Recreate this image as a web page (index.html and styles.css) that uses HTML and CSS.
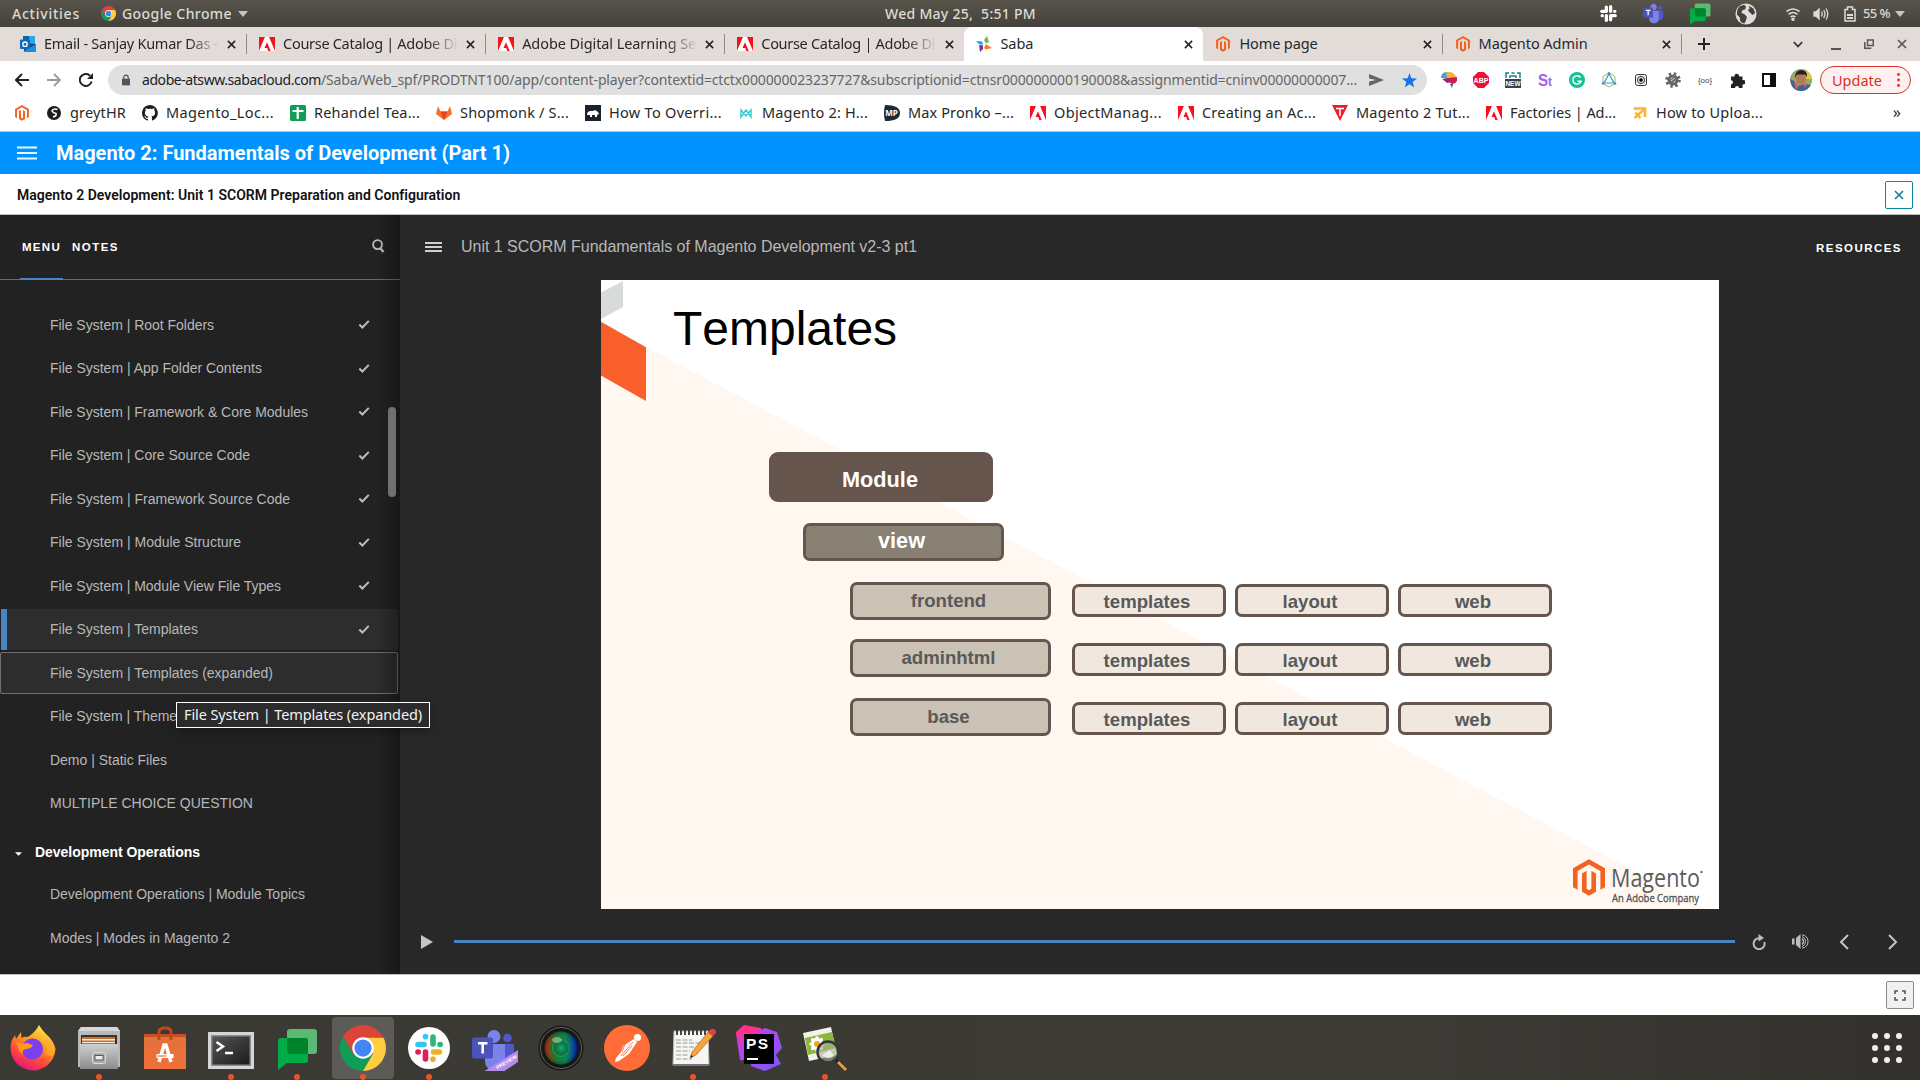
FILE: index.html
```html
<!DOCTYPE html>
<html lang="en">
<head>
<meta charset="utf-8">
<title>Saba</title>
<link rel="stylesheet" href="styles.css">
</head>
<body>
<svg class="defs" width="0" height="0">
  <defs>
    <linearGradient id="gFox" x1="0.8" y1="0" x2="0.3" y2="1"><stop offset="0" stop-color="#fff34f"/><stop offset=".4" stop-color="#ff9a20"/><stop offset=".7" stop-color="#ff4a3a"/><stop offset="1" stop-color="#e3127d"/></linearGradient>
    <linearGradient id="gSteel" x1="0" y1="0" x2="0" y2="1"><stop offset="0" stop-color="#cfcfcf"/><stop offset="1" stop-color="#8b8b8b"/></linearGradient>
    <linearGradient id="gBag" x1="0" y1="0" x2="0" y2="1"><stop offset="0" stop-color="#e2723c"/><stop offset="1" stop-color="#ef7038"/></linearGradient>
    <linearGradient id="gTerm" x1="0" y1="0" x2="1" y2="1"><stop offset="0" stop-color="#555"/><stop offset="1" stop-color="#1c1c1c"/></linearGradient>
    <linearGradient id="gRgb" x1="0" y1="0" x2="1" y2="0"><stop offset="0" stop-color="#c8200c"/><stop offset=".35" stop-color="#1f7a28"/><stop offset=".65" stop-color="#0c8a52"/><stop offset="1" stop-color="#0717d8"/></linearGradient>
    <radialGradient id="gLens"><stop offset="0" stop-color="#0fb878" stop-opacity=".9"/><stop offset=".35" stop-color="#0a6b45" stop-opacity=".6"/><stop offset=".75" stop-color="#0a7a48" stop-opacity=".15"/><stop offset="1" stop-color="#000" stop-opacity=".35"/></radialGradient>
    <linearGradient id="gPs" x1="0" y1="0" x2="1" y2="1"><stop offset="0" stop-color="#ff318c"/><stop offset=".35" stop-color="#b345f1"/><stop offset="1" stop-color="#765af8"/></linearGradient>
    <symbol id="adobe" viewBox="0 0 16 16"><path fill="#fa0f1c" d="M0 1h5.900L0 15zM10.100 1H16v14zM8 6.200l3.700 8.800H9.300l-1.100-2.900H5.500z"/></symbol>
    <symbol id="magento" viewBox="0 0 32 37"><path fill="#f26322" d="M16 0 32 9v19l-4.600 2.600V11.700L16 5.200 4.600 11.700v18.900L0 28V9z"/><path fill="#f26322" d="M9 14.200l4.600-2.600v18l2.400 1.400 2.400-1.400v-18l4.600 2.600v18.200L16 36.500l-7-4.100z"/></symbol>
    <symbol id="chrome" viewBox="0 0 48 48"><path fill="#0f9d58" d="M3.200 12 13.600 30 24 35l10.400-5L24 48A24 24 0 0 1 3.200 12z"/><path fill="#ffcd40" d="M24 13h21.300A24 24 0 0 1 24 48l10.400-18z"/><path fill="#db4437" d="M3.200 12A24 24 0 0 1 45.300 13H24L13.600 30z"/><circle cx="24" cy="24" r="11.200" fill="#fff"/><circle cx="24" cy="24" r="9" fill="#4285f4"/></symbol>
    <symbol id="slackmono" viewBox="0 0 24 24"><g fill="none" stroke="currentColor" stroke-width="4.200" stroke-linecap="round"><path d="M9.300 4v5.300M3.500 9.300h5.800M14.700 3.500v5.800M20 9.300h-.200M14.700 20v-5.300M20.500 14.700h-5.800M9.300 20.500v-5.800M4 14.700h.200"/></g></symbol>
    <symbol id="x" viewBox="0 0 10 10"><path d="M1 1l8 8M9 1L1 9" stroke="currentColor" stroke-width="1.700" fill="none"/></symbol>
    <symbol id="check" viewBox="0 0 12 10"><path d="M.800 5l3.400 3.400L11.300 1" stroke="#bdbdbd" stroke-width="2.200" fill="none"/></symbol>
    <symbol id="chat" viewBox="0 0 40 42"><rect x="10" y="1" width="30" height="25" rx="3" fill="#5bb974"/><path fill="#00ac47" d="M1 13a3 3 0 0 1 3-3h24a3 3 0 0 1 3 3v19a3 3 0 0 1-3 3H10l-9 7z"/><path fill="#00832d" d="M10 10h18a3 3 0 0 1 3 3v13H13a3 3 0 0 1-3-3z"/></symbol>
    <symbol id="teams" viewBox="0 0 46 46"><circle cx="22" cy="8.500" r="6.500" fill="#7b83eb"/><circle cx="35.500" cy="10" r="4.300" fill="#5059c9"/><path fill="#5059c9" d="M30 16h12v14c0 7-10 8-12 2z"/><path fill="#7b83eb" d="M13 16h20v17c0 13-20 13-20 0z"/><rect y="9.500" width="21" height="21" rx="2" fill="#4b53bc"/><path d="M6 15.300h9.500M10.700 15v10.500" stroke="#fff" stroke-width="2.600"/></symbol>
    <symbol id="globe" viewBox="0 0 24 24"><circle cx="12" cy="12" r="11.500" fill="#ddd"/><path fill="#45423c" d="M5 3.500l5-1.500 2 2-1 3-3 1-1 3 3 1 3 3-1 4-2 3.500-4-2-1-5-3-3 .500-5zM15 3l5 3 2 5-3 2-3-3-2-2 2-2z"/></symbol>
  </defs>
</svg>

<header class="topbar">
  <span class="activities" data-fit="68">Activities</span>
  <svg class="tb-chrome"><use href="#chrome"/></svg>
  <span class="appname" data-fit="110">Google Chrome</span>
  <svg class="tri" viewBox="0 0 10 6"><path d="M0 0h10L5 6z"/></svg>
  <span class="clock" data-fit="151">Wed May 25,&nbsp; 5:51 PM</span>
  <div class="tray">
    <svg class="s18"><use href="#slackmono"/></svg>
    <svg class="s22"><use href="#teams"/></svg>
    <svg class="s22"><use href="#chat"/></svg>
    <svg class="s22"><use href="#globe"/></svg>
    <svg class="s16" viewBox="0 0 16 16" fill="none" stroke="#dfdbd2" stroke-width="1.600"><path d="M1.500 5.500q6.500-5 13 0M3.500 8.300q4.500-3.500 9 0M5.500 11q2.500-2 5 0"/><circle cx="8" cy="13.300" r="1" fill="#dfdbd2"/></svg>
    <svg class="s16" viewBox="0 0 16 16" fill="none" stroke="#dfdbd2" stroke-width="1.300"><path fill="#dfdbd2" d="M1 6h2l3-3v10l-3-3H1z"/><path d="M8.500 5.500q1.500 2.500 0 5M10.700 4q2.500 4 0 8M13 2.500q3.500 5.500 0 11"/></svg>
    <svg class="bat" viewBox="0 0 12 16" fill="none" stroke="#dfdbd2" stroke-width="1.500"><path d="M1 3.500h2.500V1h5v2.500H11V15H1z"/><path d="M3 9h6M3 12h6" stroke-width="2"/></svg>
    <span class="pct" data-fit="27">55 %</span>
    <svg class="tri" viewBox="0 0 10 6"><path d="M0 0h10L5 6z"/></svg>
  </div>
</header>

<nav class="tabs">
  <div class="tab"><svg class="s16" viewBox="0 0 16 16"><path fill="#28a8ea" d="M4 0h11v8H4z"/><path fill="#0364b8" d="M3 0h6v7H3z"/><path fill="#14447d" d="M4 7l12 1v7H4z"/><path fill="#1490df" d="M4 15l12-7v8H4z"/><rect y="3.500" width="10" height="9.500" rx="1" fill="#0f6cbd"/><circle cx="5" cy="8.200" r="2.200" fill="none" stroke="#fff" stroke-width="1.300"/></svg><span class="ttl fade"><span data-fit="174">Email - Sanjay Kumar Das -</span></span><svg class="cx"><use href="#x"/></svg></div>
  <div class="tab"><svg class="s16 plate"><use href="#adobe"/></svg><span class="ttl fade"><span data-fit="174">Course Catalog | Adobe Di</span></span><svg class="cx"><use href="#x"/></svg></div>
  <div class="tab"><svg class="s16 plate"><use href="#adobe"/></svg><span class="ttl fade"><span data-fit="174">Adobe Digital Learning Se</span></span><svg class="cx"><use href="#x"/></svg></div>
  <div class="tab nosep"><svg class="s16 plate"><use href="#adobe"/></svg><span class="ttl fade"><span data-fit="174">Course Catalog | Adobe Di</span></span><svg class="cx"><use href="#x"/></svg></div>
  <div class="tab on"><svg class="s16" viewBox="0 0 16 16"><path fill="#14a0dc" d="M0 5l6 .500L7 9 3 8z"/><path fill="#6cbe45" d="M11 0l2 6-3 1.500L8 4z"/><path fill="#8d2a90" d="M3 9l4 .500V13l-3 3z"/><path fill="#f58220" d="M10 8l6 4-6 1.500L8 12z"/></svg><span class="ttl"><span data-fit="33">Saba</span></span><svg class="cx"><use href="#x"/></svg></div>
  <div class="tab"><svg class="s16"><use href="#magento"/></svg><span class="ttl"><span data-fit="78">Home page</span></span><svg class="cx"><use href="#x"/></svg></div>
  <div class="tab"><svg class="s16"><use href="#magento"/></svg><span class="ttl"><span data-fit="109">Magento Admin</span></span><svg class="cx"><use href="#x"/></svg></div>
  <svg class="newtab" viewBox="0 0 12 12"><path d="M6 0v12M0 6h12" stroke="#222" stroke-width="2"/></svg>
  <div class="winctl">
    <svg width="10" height="7" viewBox="0 0 10 7"><path d="M.800 1L5 5.500 9.200 1" fill="none" stroke="#333" stroke-width="1.800"/></svg>
    <svg width="10" height="12" viewBox="0 0 10 12"><path d="M0 11h10" stroke="#555" stroke-width="2"/></svg>
    <svg width="10" height="10" viewBox="0 0 10 10" fill="none" stroke="#555" stroke-width="1.500"><path d="M3.500 1h5.800v5.500H3.500zM.800 3v6.200h6.500"/></svg>
    <svg class="wx"><use href="#x"/></svg>
  </div>
</nav>

<div class="toolbar">
  <div class="navbtns">
    <svg viewBox="0 0 14 14"><path d="M14 7H1.500M7 1L1 7l6 6" fill="none" stroke="#222" stroke-width="2"/></svg>
    <svg viewBox="0 0 14 14"><path d="M0 7h12.500M7 1l6 6-6 6" fill="none" stroke="#999" stroke-width="1.800"/></svg>
    <svg viewBox="0 0 14 14"><path d="M12.600 8.500A6 6 0 1 1 11 2.700" fill="none" stroke="#222" stroke-width="2"/><path d="M14 0v6H8z" fill="#222"/></svg>
  </div>
  <div class="omni">
    <svg class="lock" viewBox="0 0 9 12"><path d="M0 4.500h9V12H0z" fill="#555"/><path d="M2 5V3a2.500 2.500 0 0 1 5 0v2" fill="none" stroke="#555" stroke-width="1.300"/></svg>
    <span class="url"><span class="host" data-fit="179">adobe-atsww.sabacloud.com</span><span data-fit="1036">/Saba/Web_spf/PRODTNT100/app/content-player?contextid=ctctx000000023237727&amp;subscriptionid=ctnsr000000000190008&amp;assignmentid=cninv00000000007...</span></span>
    <svg class="send" viewBox="0 0 15 12"><path fill="#666" d="M0 0l15 6-15 6V7.500L7 6 0 4.500z"/></svg>
    <svg class="star" viewBox="0 0 16 16"><path fill="#1a73e8" d="M8 0l2 5.500 6 .300-4.600 3.700L13 15.500 8 12l-5 3.500 1.600-6L0 5.800l6-.300z"/></svg>
  </div>
  <div class="exts">
    <svg viewBox="0 0 16 16"><path fill="#35a7dc" d="M0 6q0-5 5-6l4 1-3 5z"/><path fill="#f9b233" d="M5 .500q7-2 10 4L10 7 6 6z"/><path fill="#cf1c54" d="M15.800 5q1.500 6-4.500 7L7 10l-6-3 6-1z"/><path fill="#555" d="M9 12h3l-1 4z"/><path fill="#8b2b75" d="M2 7.500l6-1.500 1 4-3 1z"/></svg>
    <svg viewBox="0 0 16 16"><path fill="#f40d35" d="M5 0h6l5 5v6l-5 5H5l-5-5V5z"/><text x="8" y="10.800" font-size="7" font-weight="700" fill="#fff" text-anchor="middle">ABP</text></svg>
    <svg viewBox="0 0 16 16"><path d="M1 6V1h3M6.500 1h3M12 1h3v5M5 6V4h6v2" fill="none" stroke="#188196" stroke-width="1.500"/><rect y="7" width="16" height="9" fill="#404040"/><text x="8" y="14" font-size="6.500" font-weight="700" fill="#fff" text-anchor="middle">NEW</text></svg>
    <svg viewBox="0 0 16 16"><text x="1" y="14" font-size="17" font-weight="700" fill="#a160ef" textLength="14" lengthAdjust="spacingAndGlyphs">S<tspan font-size="13">t</tspan></text></svg>
    <svg viewBox="0 0 16 16"><circle cx="8" cy="8" r="8" fill="#15c39a"/><path d="M11.500 5.500A4.200 4.200 0 1 0 12 9.300H8.500" fill="none" stroke="#fff" stroke-width="1.500"/></svg>
    <svg viewBox="0 0 16 16" fill="none"><path d="M8 1l6 3.500v7L8 15l-6-3.500v-7z" stroke="#7cc66a"/><path d="M8 2l5 9H3z" stroke="#4793c9" stroke-width="1.200"/><g fill="#4793c9"><circle cx="8" cy="1.500" r="1.500"/><circle cx="2" cy="11.500" r="1.300"/><circle cx="14" cy="11.500" r="1.300"/></g></svg>
    <svg viewBox="0 0 16 16" fill="none" stroke="#333"><rect x="2.500" y="2.500" width="11" height="11" rx="2" fill="#eee"/><circle cx="8" cy="8" r="3.600"/><circle cx="8" cy="8" r="1.500" fill="#000"/></svg>
    <svg viewBox="0 0 16 16"><circle cx="8" cy="8" r="6.300" fill="none" stroke="#666" stroke-width="3" stroke-dasharray="2.400 2.550"/><circle cx="8" cy="8" r="5.500" fill="#666"/><path d="M5.500 7l2-1.500M8.500 10.500l2-1.500M6 9l4-3" stroke="#ddd"/></svg>
    <svg viewBox="0 0 16 16"><text x="8" y="10.500" font-size="8" fill="#444" text-anchor="middle">{oo}</text></svg>
    <svg viewBox="0 0 16 16"><path fill="#222" d="M2 4.500h3.500a2.300 2.300 0 1 1 4.500 0h3.500v3.700a2.200 2.200 0 1 1 0 4V16H10a2 2 0 1 0-4 0H2v-3.800a2 2 0 1 0 0-4z"/></svg>
    <svg viewBox="0 0 16 16"><path d="M2 2h12v12H2z" fill="none" stroke="#111" stroke-width="2"/><path fill="#111" d="M9 2h5v12H9z"/></svg>
    <svg class="avatar" viewBox="0 0 22 22"><clipPath id="av"><circle cx="11" cy="11" r="11"/></clipPath><g clip-path="url(#av)"><path fill="#9aa868" d="M0 0h22v22H0z"/><path fill="#d8c84c" d="M13 0h9v10h-6z"/><ellipse cx="11" cy="9.500" rx="5" ry="6" fill="#b9775a"/><path fill="#222233" d="M5 9q0-8 6.500-8 6 0 5.500 7l-2-2.500H7z"/><path fill="#3f63a0" d="M0 10l4 2 4 5 6-2 7 1-2 6H3z"/><path fill="#e2604c" d="M4 13l5 3-3 5zM13 15l4-1-2 5z"/></g></svg>
  </div>
  <div class="update"><span data-fit="50">Update</span><svg viewBox="0 0 3 14"><g fill="#d93025"><circle cx="1.500" cy="1.500" r="1.400"/><circle cx="1.500" cy="7" r="1.400"/><circle cx="1.500" cy="12.500" r="1.400"/></g></svg></div>
</div>

<div class="bookmarks">
  <svg><use href="#magento"/></svg>
  <svg viewBox="0 0 16 16"><circle cx="8" cy="8" r="7" fill="#1c1c1c"/><path d="M11.500 4.500Q7 3 6 6q1 2 4 2.500 1 2.500-3 3.500" stroke="#fff" stroke-width="1.600" fill="none"/></svg><span data-fit="56">greytHR</span>
  <svg viewBox="0 0 16 16"><path fill="#1b1f23" d="M8 0C3.600 0 0 3.600 0 8c0 3.500 2.300 6.500 5.500 7.600.400.100.500-.200.500-.400v-1.400c-2.200.500-2.700-1-2.700-1-.400-1-.900-1.200-.900-1.200-.700-.500.100-.500.100-.500.800.100 1.200.800 1.200.800.700 1.300 1.900.900 2.300.700.100-.500.300-.900.500-1.100-1.800-.200-3.600-.900-3.600-4 0-.900.300-1.600.800-2.100-.100-.200-.400-1 .100-2.100 0 0 .700-.200 2.200.800a7.700 7.700 0 0 1 4 0c1.500-1 2.200-.800 2.200-.800.400 1.100.200 1.900.100 2.100.500.600.800 1.300.800 2.100 0 3.100-1.900 3.700-3.700 3.900.300.300.600.800.600 1.500v2.200c0 .200.100.500.600.400A8 8 0 0 0 8 0z"/></svg><span data-fit="108">Magento_Loc...</span>
  <svg viewBox="0 0 16 16"><rect width="16" height="16" rx="1.500" fill="#0f9d58"/><path d="M7.700 2v12M2.500 6h11" stroke="#fff" stroke-width="2.200"/></svg><span data-fit="106">Rehandel Tea...</span>
  <svg viewBox="0 0 16 16"><path fill="#fc6d26" d="M8 15L0 9l2-8 2.500 5.500h7L14 1l2 8z"/><path fill="#e24329" d="M8 15L4.500 6.500h7z"/></svg><span data-fit="109">Shopmonk / S...</span>
  <svg viewBox="0 0 16 16"><rect width="16" height="16" fill="#1a222d"/><path fill="#fff" d="M2 10q0-4 4-4l2 0 2-1 3 2 1 2-2 1v2h-2v-2H7v2H5v-2z"/></svg><span data-fit="113">How To Overri...</span>
  <svg viewBox="0 0 16 16"><path d="M3 12V5l5 6 5-6v7L8 5z" stroke="#32cbd0" stroke-width="1.400" fill="none"/></svg><span data-fit="106">Magento 2: H...</span>
  <svg viewBox="0 0 16 16"><path fill="#1d2b36" d="M1 0q15 0 15 8t-15 8q-2-8 0-16z"/><text x="7.500" y="11" font-size="8" font-weight="700" fill="#fff" text-anchor="middle">MP</text></svg><span data-fit="106">Max Pronko –...</span>
  <svg><use href="#adobe"/></svg><span data-fit="108">ObjectManag...</span>
  <svg><use href="#adobe"/></svg><span data-fit="114">Creating an Ac...</span>
  <svg viewBox="0 0 16 16"><path fill="#ee1c25" d="M0 0h16L8 16z"/><path d="M4 3.500h8M8 3.500V11" stroke="#fff" stroke-width="1.600"/></svg><span data-fit="114">Magento 2 Tut...</span>
  <svg><use href="#adobe"/></svg><span data-fit="106">Factories | Ad...</span>
  <svg viewBox="0 0 16 16"><path d="M1.500 3.500H13V12" fill="none" stroke="#fbb52c" stroke-width="2.600"/><path d="M12 4.500L2.500 13M3.500 7.500q2 3 5 5.500" fill="none" stroke="#fbb52c" stroke-width="2.400"/></svg><span data-fit="107">How to Uploa...</span>
  <span class="more">»</span>
</div>

<div class="course">
  <svg width="20" height="14" viewBox="0 0 20 14"><path d="M0 1.500h20M0 7h20M0 12.500h20" stroke="#fff" stroke-width="2" opacity=".9"/></svg>
  <h1 data-fit="454">Magento 2: Fundamentals of Development (Part 1)</h1>
</div>
<div class="lesson">
  <h2 data-fit="443">Magento 2 Development: Unit 1 SCORM Preparation and Configuration</h2>
  <button class="closebtn"><svg><use href="#x"/></svg></button>
</div>

<main class="player">
  <aside class="side">
    <div class="sidetabs"><span class="act" data-fit="39">MENU</span><span data-fit="47">NOTES</span>
      <svg class="search" viewBox="0 0 14 15"><circle cx="6" cy="6" r="4.800" fill="none" stroke="#bdbdbd" stroke-width="2"/><path d="M8.500 9.500l4 4.500" stroke="#bdbdbd" stroke-width="2.500"/></svg></div>
    <ul class="menu">
      <li><span data-fit="164">File System | Root Folders</span><svg><use href="#check"/></svg></li>
      <li><span data-fit="212">File System | App Folder Contents</span><svg><use href="#check"/></svg></li>
      <li><span data-fit="258">File System | Framework &amp; Core Modules</span><svg><use href="#check"/></svg></li>
      <li><span data-fit="200">File System | Core Source Code</span><svg><use href="#check"/></svg></li>
      <li><span data-fit="240">File System | Framework Source Code</span><svg><use href="#check"/></svg></li>
      <li><span data-fit="191">File System | Module Structure</span><svg><use href="#check"/></svg></li>
      <li><span data-fit="231">File System | Module View File Types</span><svg><use href="#check"/></svg></li>
      <li class="cur"><span data-fit="148">File System | Templates</span><svg><use href="#check"/></svg></li>
      <li class="hov"><span data-fit="223">File System | Templates (expanded)</span></li>
      <li><span data-fit="134">File System | Themes</span></li>
      <li><span data-fit="117">Demo | Static Files</span></li>
      <li><span data-fit="203">MULTIPLE CHOICE QUESTION</span></li>
      <li class="head"><svg class="caret" viewBox="0 0 8 4"><path d="M0 0h8L4 4z" fill="#fff"/></svg><span data-fit="165">Development Operations</span></li>
      <li><span data-fit="255">Development Operations | Module Topics</span></li>
      <li><span data-fit="180">Modes | Modes in Magento 2</span></li>
    </ul>
    <i class="shade"></i><i class="thumb"></i>
    <div class="tip"><span data-fit="238">File System | Templates (expanded)</span></div>
  </aside>
  <section class="stage">
    <div class="stagehead">
      <svg width="17" height="10" viewBox="0 0 17 10"><path d="M0 1h17M0 5h17M0 9h17" stroke="#cfcfcf" stroke-width="2"/></svg>
      <span class="unit" data-fit="456">Unit 1 SCORM Fundamentals of Magento Development v2-3 pt1</span>
      <span class="res" data-fit="86">RESOURCES</span>
    </div>
    <div class="slide">
      <svg class="bg" viewBox="0 0 1118 629"><path fill="#fff7f0" d="M0 43L1105 629H0z"/><path fill="#f95f2b" d="M0 41.700l45 25.500v53.800L0 95.500z"/><path fill="#d9dadb" d="M0 12.500L22 1v26L0 39z"/></svg>
      <h3>Templates</h3>
      <div class="node module">Module</div>
      <div class="node view">view</div>
      <div class="node dir r1">frontend</div><div class="node leaf r1 c1">templates</div><div class="node leaf r1 c2">layout</div><div class="node leaf r1 c3">web</div>
      <div class="node dir r2">adminhtml</div><div class="node leaf r2 c1">templates</div><div class="node leaf r2 c2">layout</div><div class="node leaf r2 c3">web</div>
      <div class="node dir r3">base</div><div class="node leaf r3 c1">templates</div><div class="node leaf r3 c2">layout</div><div class="node leaf r3 c3">web</div>
      <svg class="brand" viewBox="0 0 132 48"><use href="#magento" width="32" height="37.500"/><text x="38" y="27.500" font-size="25.500" fill="#5a5d5e" textLength="89" lengthAdjust="spacingAndGlyphs">Magento</text><circle cx="128.500" cy="13" r="1.300" fill="#777"/><text x="39" y="42.500" font-size="11.500" fill="#4d5051" stroke="#4d5051" stroke-width=".3" textLength="87" lengthAdjust="spacingAndGlyphs">An Adobe Company</text></svg>
    </div>
    <div class="controls">
      <svg width="12" height="14" viewBox="0 0 12 14"><path d="M0 0l12 7-12 7z" fill="#c4c4c4"/></svg>
      <i class="track"></i>
      <svg width="14" height="16" viewBox="0 0 14 16"><path d="M12.300 8A5.500 5.500 0 1 1 7.500 4.200" fill="none" stroke="#bdbdbd" stroke-width="2"/><path d="M6.500 0l5.500 4-5.500 3.500z" fill="#bdbdbd"/></svg>
      <svg width="17" height="15" viewBox="0 0 17 15" fill="none" stroke="#bdbdbd"><path d="M0 4.500h2.500v6H0zM4 4l4.500-4v15L4 11z" fill="#bdbdbd" stroke="none"/><path d="M10 4.500q3 3 0 6" stroke-width="1.300"/><path d="M10 .800q6 1 6 6.700t-6 6.700M10 2.500q3.500 1 3.500 5t-3.500 5"/></svg>
      <svg width="10" height="16" viewBox="0 0 10 16"><path d="M9 1L2 8l7 7" fill="none" stroke="#c4c4c4" stroke-width="2"/></svg>
      <svg width="10" height="16" viewBox="0 0 10 16"><path d="M1 1l7 7-7 7" fill="none" stroke="#c4c4c4" stroke-width="2"/></svg>
    </div>
  </section>
</main>

<div class="foot"><button class="fullbtn"><svg width="12" height="11" viewBox="0 0 12 11"><path d="M1 4V1h3M8 1h3v3M11 7v3H8M4 10H1V7" fill="none" stroke="#555" stroke-width="1.600"/></svg></button></div>

<footer class="dock">
  <div class="app"><svg viewBox="0 0 46 46"><path fill="url(#gFox)" d="M29 0q3 5 7 9 8 7 9.500 15A22.500 22.500 0 1 1 2 15l3-5 1 4 5-7 .500 6q3-2 6-1Q25 8 29 0z"/><circle cx="22.500" cy="24" r="10.500" fill="#7a3ff0"/><path fill="#ff9a20" d="M6 17q6 3 11 1l6 2q-2 4-7 4-5 1-3 6-5-4-5-9z"/><path fill="#ffb030" d="M31 14q8 7 4 16l8 1q4-10-5-17z" opacity=".6"/></svg></div>
  <div class="app run"><svg viewBox="0 0 46 46"><path fill="#b9b9b9" d="M2 6l3-4h36l3 4v36H2z"/><path fill="#d8d8d8" d="M2 6l3-4h36l3 4z"/><path fill="#333" d="M5 10h36v12H5z"/><path fill="#c8702c" d="M6 12h33v8H6z"/><path fill="#f7e9d8" d="M6 14h33v1.500H6zM6 17h33v1H6z"/><path fill="url(#gSteel)" d="M4 19h38v25H4z"/><rect x="16.500" y="27.500" width="13" height="11" rx="2" fill="#aaa" stroke="#ddd"/><rect x="19" y="30.500" width="8" height="4.500" fill="#eee" stroke="#555"/></svg></div>
  <div class="app"><svg viewBox="0 0 46 46"><path fill="#c94f1f" d="M2 9h42v5H2z"/><path fill="url(#gBag)" d="M2 12h42v32H2z"/><path d="M17 15V7q0-4 6-4t6 4v8" fill="none" stroke="#c4471b" stroke-width="3"/><path d="M17 37l5-17h2l5 17" fill="none" stroke="#fff" stroke-width="3.500"/><path d="M14.500 31h17" stroke="#fff" stroke-width="4"/><path d="M15.500 31h9" stroke="#ef7038" stroke-width="1.200"/></svg></div>
  <div class="app run"><svg viewBox="0 0 46 46"><path fill="#d6d6d6" d="M0 7h46v37H0z"/><path fill="#8b8b8b" d="M3 10h40v31H3z"/><path fill="url(#gTerm)" d="M4.500 11.500h37v28h-37z"/><path d="M8.500 17l6.500 4.500L8.500 26M17 28h8" fill="none" stroke="#fff" stroke-width="2.500"/></svg></div>
  <div class="app run"><svg viewBox="-1 -3 42 46"><use href="#chat" width="40" height="42"/></svg></div>
  <div class="app run on"><svg><use href="#chrome"/></svg></div>
  <div class="app run"><svg viewBox="0 0 46 46"><circle cx="23" cy="23" r="21" fill="#fff"/><g stroke-width="5.600" stroke-linecap="round"><path stroke="#36c5f0" d="M12 19.500h6M19.500 11.500v.200"/><path stroke="#2eb67d" d="M27 12v7M34 19.500h.200"/><path stroke="#ecb22e" d="M27.500 27h6M27 34v.200"/><path stroke="#e01e5a" d="M19.500 27v7M12 27h.200"/></g></svg></div>
  <div class="app"><svg viewBox="0 -3 46 46"><use href="#teams" width="46" height="46"/><path fill="#b18ce8" d="M11 44L46 22v12L31 44z"/><text transform="translate(25.500 41.500) rotate(-31)" font-size="5" font-weight="700" fill="#fff">PREVIEW</text></svg></div>
  <div class="app"><svg viewBox="0 0 46 46"><circle cx="23" cy="23" r="22.500" fill="#161616"/><circle cx="23" cy="23" r="20.500" fill="none" stroke="#777" stroke-width=".8"/><circle cx="23" cy="23" r="16.500" fill="url(#gRgb)"/><circle cx="23" cy="23" r="16.500" fill="url(#gLens)"/><circle cx="23" cy="23" r="8.500" fill="none" stroke="#19b37c" stroke-width="1" opacity=".7"/><ellipse cx="19" cy="15" rx="5" ry="3" fill="#bfd8a0" opacity=".55"/></svg></div>
  <div class="app"><svg viewBox="0 0 46 46"><circle cx="23" cy="23" r="23" fill="#ff6c37"/><circle cx="33.500" cy="12.500" r="3.600" fill="#fff"/><path fill="#fff" d="M30 14l3 3-8 12-10 7-4 1 1-4 5-6 2-6z"/><path d="M29 17L17 31M28 21l-9 10M21 19l-3 8" stroke="#ff6c37" stroke-width=".900"/></svg></div>
  <div class="app run"><svg viewBox="0 0 46 46"><path fill="#f5f5f3" stroke="#bbb" d="M4 6h34l1 34H3z"/><path fill="#777" d="M3 39h36v1.500H3z"/><path d="M7 4v6M11 4v6M15 4v6M19 4v6M23 4v6M27 4v6M31 4v6M35 4v6" stroke="#333" stroke-width="1.800"/><path d="M6 15h16M6 18h26M6 22h18M6 26h14M6 30h13M6 34h16" stroke="#999" stroke-dasharray="5 1.500"/><path fill="#f6a43a" stroke="#b5651c" stroke-width=".700" d="M38 7l5 4-17 19-6 3 2-6z"/><path fill="#e0404a" d="M41 4q5-1 5 4l-3 3-5-4z"/><path fill="#222" d="M20 33l1.500-3 1.700 1.500z"/></svg></div>
  <div class="app"><svg viewBox="0 0 46 46"><path fill="#ff318c" d="M0 7L8 0l17 3v14L5 36z"/><path fill="url(#gPs)" d="M0 8l9 3 20-8 12 4 5 16-6 7 5 9-16 7-14-5v-6H4z"/><path fill="#000" d="M8 9h30v30H8z"/><text x="10" y="24" font-size="15.500" font-weight="700" fill="#fff" textLength="22">PS</text><path d="M11 34h11" stroke="#fff" stroke-width="2"/></svg></div>
  <div class="app run"><svg viewBox="0 0 46 46"><path fill="#f2f2ec" d="M1 8l28-6 6 28-28 6z"/><path fill="#8cb63c" d="M3 13l27-6 4 16-28 7z"/><g fill="#fff"><ellipse cx="15" cy="19" rx="8" ry="3"/><ellipse cx="15" cy="19" rx="3" ry="8"/><ellipse cx="15" cy="19" rx="8" ry="3" transform="rotate(45 15 19)"/><ellipse cx="15" cy="19" rx="8" ry="3" transform="rotate(-45 15 19)"/></g><circle cx="15" cy="19" r="3" fill="#f3a51c"/><circle cx="26" cy="27" r="10.500" fill="#a9ab8d" fill-opacity=".6" stroke="#33363a" stroke-width="2.500"/><path d="M20 30q5 6 12 1l-4-6z" fill="#f5f5ee" opacity=".8"/><path d="M34 35l9 9" stroke="#222" stroke-width="3.500"/><path d="M36 37l8 8" stroke="#dda04c" stroke-width="3"/></svg></div>
  <svg class="grid" width="30" height="30" viewBox="0 0 30 30" fill="#f1f0ec"><circle cx="3" cy="3" r="3"/><circle cx="15" cy="3" r="3"/><circle cx="27" cy="3" r="3"/><circle cx="3" cy="15" r="3"/><circle cx="15" cy="15" r="3"/><circle cx="27" cy="15" r="3"/><circle cx="3" cy="27" r="3"/><circle cx="15" cy="27" r="3"/><circle cx="27" cy="27" r="3"/></svg>
</footer>
<script src="fit.js"></script>
</body>
</html>
```
FILE: fit.js
```js
// Tracks each label so that it fills the width given in its data-fit attribute.
document.querySelectorAll('[data-fit]').forEach(function (el) {
  var target = parseFloat(el.dataset.fit);
  var natural = el.getBoundingClientRect().width;
  var count = Array.from(el.textContent).length;
  el.style.letterSpacing = ((target - natural) / count).toFixed(3) + 'px';
});
```
FILE: styles.css
```css
* { box-sizing: border-box; }
body { margin: 0; width: 1920px; height: 1080px; overflow: hidden; display: flex; flex-direction: column; font-family: "Noto Sans", "Open Sans", sans-serif; font-size: 14.5px; color: #26282b; background: #fff; }
.defs { position: absolute; }
svg { display: block; flex: none; }
[data-fit] { display: inline-block; white-space: nowrap; flex: none; }
h1, h2, h3, ul { margin: 0; padding: 0; }
.s16 { width: 16px; height: 16px; }
.s18 { width: 19px; height: 19px; }
.s22 { width: 22px; height: 22px; }
.plate { background: linear-gradient(#fff, #fff) center / 16px 14px no-repeat; }

.topbar { position: relative; height: 27px; flex: none; display: flex; align-items: center; padding-left: 12px; color: #dfdbd2; background: linear-gradient(#58544b, #43423c); font-weight: 500; font-size: 14px; }
.tb-chrome { width: 15px; height: 15px; margin-left: 21px; }
.appname { margin-left: 6px; }
.topbar .tri { width: 10px; height: 6px; margin-left: 6px; fill: #c9c5bd; }
.clock { margin-left: 637px; padding-bottom: 1px; }
.tray { margin-left: auto; padding-right: 15px; display: flex; align-items: center; color: #fff; }
.tray .s18 { margin-right: 25px; }
.tray .s22 { margin-right: 24px; }
.tray .s22:nth-child(4) { margin-right: 28px; }
.tray .s16 { margin-right: 12px; }
.bat { width: 12px; height: 16px; margin-left: 3px; margin-right: 7px; }
.pct { font-size: 13px; color: #dfdbd2; padding-bottom: 1px; }
.tray .tri { margin-left: 5px; }

.tabs { height: 34px; flex: none; display: flex; align-items: center; background: #e2dbd8; padding-left: 8px; }
.tab { width: 239.100px; height: 34px; flex: none; display: flex; align-items: center; padding-left: 12px; position: relative; }
.tab:not(.nosep):not(.on)::after { content: ""; margin-left: 10px; width: 1px; height: 20px; background: #8f8b89; }
.tab.on { background: #fff; border-radius: 8px 8px 0 0; }
.ttl { width: 176px; margin-left: 8px; overflow: hidden; line-height: 22px; padding-bottom: 2px; }
.fade { -webkit-mask-image: linear-gradient(90deg, #000 82%, transparent); mask-image: linear-gradient(90deg, #000 82%, transparent); }
.cx { width: 9px; height: 9px; margin-left: 7.500px; color: #222; }
.newtab { width: 12px; height: 12px; margin-left: 16px; }
.winctl { margin-left: auto; display: flex; align-items: center; gap: 23px; padding-right: 13px; }
.winctl svg:first-child { margin-right: 5px; }
.wx { width: 10px; height: 10px; color: #555; }

.toolbar { height: 40px; flex: none; display: flex; align-items: center; padding: 0 9px 2px 15px; }
.navbtns { display: flex; gap: 18px; width: 93px; }
.navbtns svg { width: 14px; height: 14px; }
.omni { width: 1319px; height: 30px; border-radius: 15px; background: #e0e0e0; display: flex; align-items: center; padding-left: 14px; }
.lock { width: 8px; height: 12px; }
.url { width: 1216px; margin-left: 12px; color: #666; white-space: nowrap; line-height: 22px; font-size: 14px; }
.host { color: #222; }
.send { width: 15px; height: 12px; margin-left: 11px; }
.star { width: 15px; height: 15px; margin-left: 18px; }
.exts { display: flex; align-items: center; gap: 16px; margin-left: 14px; }
.exts svg { width: 16px; height: 16px; font-family: "Liberation Sans", sans-serif; }
.exts .avatar { width: 22px; height: 22px; margin-left: -3px; }
.update { width: 91px; height: 28px; margin-left: auto; border: 1px solid #d93025; border-radius: 14px; background: #fdf0ee; color: #d93025; display: flex; align-items: center; justify-content: space-between; padding: 0 10px 0 11px; }
.update svg { width: 3px; height: 14px; }

.bookmarks { height: 31px; flex: none; display: flex; align-items: center; border-bottom: 1px solid #c5c5c5; padding: 0 18px 7px 14px; }
.bookmarks span { padding-bottom: 2px; }
.bookmarks svg { width: 16px; height: 16px; margin-right: 8px; margin-left: 16px; }
.bookmarks svg:first-child { margin-left: 0; margin-right: 0; }
.bookmarks .more { margin-left: auto; font-size: 16px; padding-right: 1px; }

.course { height: 42px; flex: none; background: #0093ff; display: flex; align-items: center; padding-left: 17px; }
.course h1 { margin-left: 19px; font: 700 20px/24px Roboto, sans-serif; color: #fff; }
.lesson { height: 41px; flex: none; display: flex; align-items: center; justify-content: space-between; padding: 1px 7px 0 17px; border-bottom: 1px solid #bdbdbd; }
.lesson h2 { font: 600 14px/18px Roboto, sans-serif; color: #111; }
.closebtn { width: 28px; height: 28px; border: 1px solid #0d84a8; border-radius: 2px; background: #fff; color: #0d84a8; padding: 8px; }
.closebtn svg { width: 10px; height: 10px; }

.player { height: 759px; flex: none; display: flex; background: #282828; font-family: "Liberation Sans", Arial, sans-serif; }
.side { position: relative; width: 400px; background: #222; color: #b8b8b8; font-size: 14px; }
.sidetabs { height: 65px; display: flex; align-items: center; border-bottom: 1px solid #6c6c6c; padding: 0 15px 0 22px; color: #fff; font-weight: 700; font-size: 11.500px; position: relative; }
.sidetabs .act { margin-right: 11px; }
.sidetabs::after { content: ""; position: absolute; left: 20px; bottom: -1px; width: 43px; height: 2px; background: #4a85c2; }
.search { width: 13px; height: 14px; margin: 0 0 3px auto; }
.menu { list-style: none; padding-top: 24px; }
.menu li { width: 398px; height: 41.500px; margin-bottom: 2px; display: flex; align-items: center; justify-content: space-between; padding: 0 28px 0 50px; }
.menu li > svg { width: 12px; height: 9px; }
.menu .cur { background: #2d2d2d; box-shadow: inset 1px 0 #222, inset 7px 0 #4a85c2; }
.menu .hov { background: #2d2d2d; outline: 1px solid #707070; outline-offset: -1px; border-radius: 2px; }
.menu .head { color: #fff; font-weight: 700; justify-content: flex-start; padding-left: 15px; margin-top: 7px; margin-bottom: 1px; }
.menu .head .caret { width: 7px; height: 4px; margin: 4px 13px 0 0; }
.shade { position: absolute; right: 0; top: 0; bottom: 0; width: 24px; background: linear-gradient(90deg, transparent, rgba(0,0,0,.3)); }
.thumb { position: absolute; left: 388px; top: 192px; width: 8px; height: 90px; border-radius: 4px; background: #707070; }
.tip { position: absolute; left: 176px; top: 487px; width: 254px; height: 26px; z-index: 3; border: 1px solid #fff; background: #2b2b2b; color: #f2f2f2; font: 14.500px/23px "Noto Sans", sans-serif; padding-left: 7px; box-shadow: 0 4px 10px rgba(0,0,0,.3); }

.stage { width: 1520px; display: flex; flex-direction: column; }
.stagehead { height: 65px; display: flex; align-items: center; padding: 0 18px 2px 25px; color: #b8b8b8; }
.unit { margin-left: 19px; font-size: 16px; }
.res { margin-left: auto; color: #fff; font-weight: 700; font-size: 11.500px; padding-top: 2px; }
.slide { position: relative; margin-left: 201px; width: 1118px; height: 629px; background: #fff; overflow: hidden; }
.bg { position: absolute; inset: 0; width: 1118px; height: 629px; }
.slide h3 { position: absolute; left: 72px; top: 21px; font: 400 48px/55px "Liberation Sans", sans-serif; font-kerning: none; color: #000; }
.node { position: absolute; border: 3px solid #65554d; border-radius: 7px; display: flex; align-items: center; justify-content: center; font-weight: 700; font-size: 18.600px; color: #58595b; }
.module { left: 167.500px; top: 172px; width: 224px; height: 50px; border-radius: 9px; background: #65554d; color: #fff; font-size: 21.700px; padding: 5px 1px 0 0; }
.view { left: 201.500px; top: 243px; width: 201px; height: 38px; background: #878073; color: #fff; font-size: 21.700px; padding: 0 3px 3px 0; }
.dir { left: 248.500px; width: 201px; height: 38px; background: #cac2b4; padding: 1px 3px 0 0; }
.dir.r1 { top: 301.500px; } .dir.r2 { top: 358.500px; } .dir.r3 { top: 417.500px; }
.leaf { width: 154px; height: 33px; background: #f0e8df; padding: 3px 3px 0 0; }
.leaf.r1 { top: 304px; } .leaf.r2 { top: 363px; } .leaf.r3 { top: 422px; }
.c1 { left: 470.500px; } .c2 { left: 633.500px; } .c3 { left: 796.500px; }
.brand { position: absolute; left: 972px; top: 579px; width: 132px; height: 48px; font-family: "Open Sans", sans-serif; }
.controls { height: 65px; display: flex; align-items: center; padding: 0 22px 0 21px; }
.track { width: 1281px; height: 3px; margin: -1px 17px 0 21px; background: #4a85c2; }
.controls svg:nth-of-type(2) { margin-right: 26px; }
.controls svg:nth-of-type(3) { margin-right: 30px; }
.controls svg:nth-of-type(4) { margin-right: 39px; }

.foot { height: 41px; flex: none; border-top: 1px solid #c0c0c0; display: flex; align-items: center; justify-content: flex-end; padding-right: 6px; }
.fullbtn { width: 28px; height: 28px; border: 1px solid #8a8a8a; border-radius: 2px; background: #f0f0f0; padding: 0; display: flex; align-items: center; justify-content: center; }
.dock { height: 65px; flex: none; display: flex; align-items: center; background: linear-gradient(90deg, #3b3934, #3b3a35 75%, #33312d); padding-right: 18px; }
.app { position: relative; width: 66px; height: 62px; display: flex; align-items: center; justify-content: center; }
.app svg { width: 46px; height: 46px; font-family: "Liberation Sans", sans-serif; position: relative; }
.app.on::before { content: ""; position: absolute; left: 2px; top: 0; width: 62px; height: 62px; border-radius: 4px; background: #5d5b57; }
.app.run::after { content: ""; position: absolute; left: 30px; top: 57px; width: 6px; height: 6px; border-radius: 50%; background: #e95420; }
.grid { margin-left: auto; }
```
